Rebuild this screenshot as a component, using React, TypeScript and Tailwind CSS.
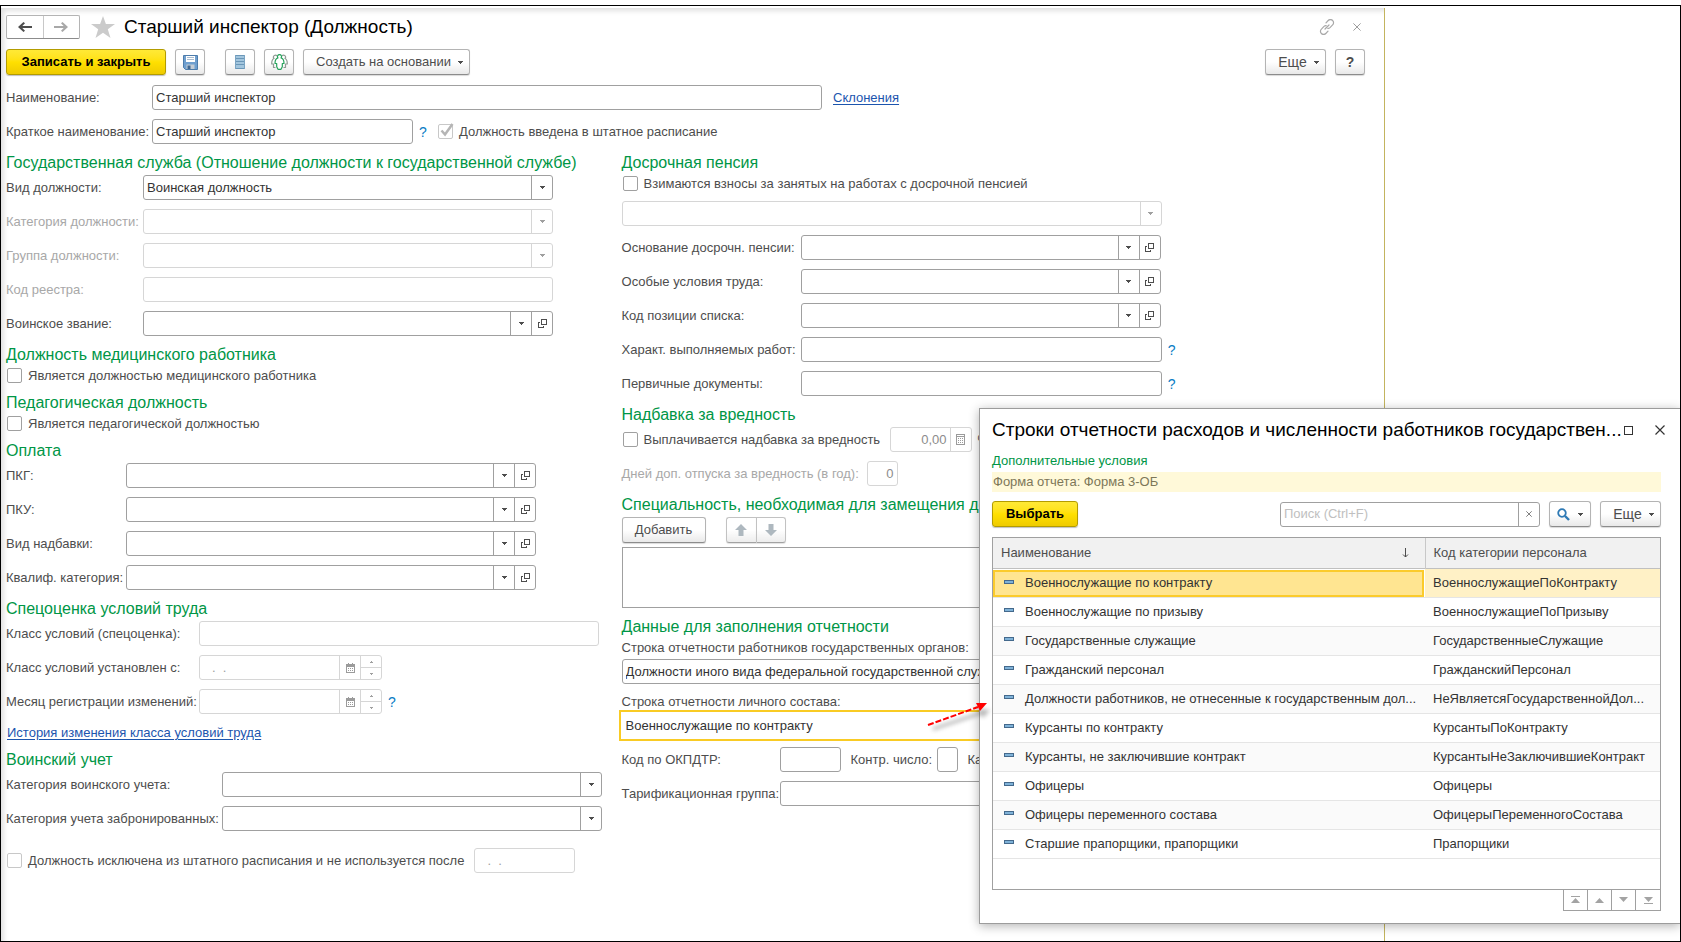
import { useId } from "react";
import type { ReactNode } from "react";
import clsx from "clsx";

// ICONS //
function CaretIcon({ className }: { className?: string }) {
  return (
    <svg className={className} width="5" height="3" viewBox="0 0 5 3" fill="currentColor" shapeRendering="crispEdges">
      <path d="M0 0h5v1H4v1H3v1H2V2H1V1H0z" />
    </svg>
  );
}

function OpenIcon() {
  return (
    <svg width="9" height="9" viewBox="0 0 9 9" fill="none" stroke="currentColor" shapeRendering="crispEdges">
      <path d="M3.5 .5h5v5h-5z" />
      <path d="M2 3.5H.5v5h5V7" />
    </svg>
  );
}

function ArrowLeftIcon({ className }: { className?: string }) {
  return (
    <svg className={className} width="14" height="10" viewBox="0 0 14 10" fill="currentColor">
      <path d="M0 5l5.500-5L7 1.200 4.300 4H14v2H4.300L7 8.800 5.500 10z" />
    </svg>
  );
}

function StarIcon() {
  return (
    <svg width="24" height="22" viewBox="0 0 24 22" fill="#cbcbcb">
      <path d="M12 0l2.900 8H24l-7.200 5.200L19.500 22 12 16.700 4.500 22l2.700-8.800L0 8h9.100z" />
    </svg>
  );
}

function LinkIcon() {
  return (
    <svg width="16" height="16" viewBox="0 0 16 16" fill="none" stroke="#a8a8a8" strokeWidth="1.200" strokeLinecap="round">
      <path d="M7 3.800l2.200-2.300a3 3 0 0 1 4.400 0 3 3 0 0 1 0 4.400L11 8.600a3 3 0 0 1-2.200.7" />
      <path d="M9 12.200l-2.200 2.300a3 3 0 0 1-4.400 0 3 3 0 0 1 0-4.400L5 7.400a3 3 0 0 1 2.200-.7" />
      <path d="M6 10l4-4" />
    </svg>
  );
}

function CrossIcon({ size, color }: { size: number; color: string }) {
  return (
    <svg width={size} height={size} viewBox="0 0 10 10" fill="none" stroke={color} strokeWidth="1.200">
      <path d="M.5.5l9 9M9.500.5l-9 9" />
    </svg>
  );
}

function SaveIcon() {
  return (
    <svg width="15" height="15" viewBox="0 0 15 15">
      <path d="M.5.5h14v14H2.500l-2-2z" fill="#6f9fcf" stroke="#4d7cab" />
      <path d="M3 1h9v6H3z" fill="#fff" />
      <path d="M4 2.500h7M4 4.500h7" stroke="#a9bccf" />
      <path d="M3.500 9.500h8V14h-8z" fill="#c3ccd5" />
      <path d="M4.500 10.500h3V14h-3z" fill="#3f6790" />
    </svg>
  );
}

function ListIcon() {
  return (
    <svg width="10" height="14" viewBox="0 0 10 14" shapeRendering="crispEdges">
      <path d="M0 0h10v14H0z" fill="#a3c6de" />
      <path d="M0 .5h10M0 3.500h10M0 6.500h10M0 9.500h10M0 13.500h10" stroke="#6b97b8" />
      <path d="M.5 0v14M9.500 0v14" stroke="#7ba5c4" />
    </svg>
  );
}

function PeopleIcon() {
  return (
    <svg width="17" height="16" viewBox="0 0 17 16" fill="none" strokeWidth="1.200" strokeLinejoin="round">
      <path
        d="M6 1.800a2 2 0 0 0-3 2.700C1.200 5.200.7 6.500.7 10H2.500v3.500h2M11 1.800a2 2 0 0 1 3 2.700c1.800.7 2.300 2 2.300 5.500h-1.800v3.500h-2"
        stroke="#8f9a93"
      />
      <path
        d="M8.500.7a1.900 1.900 0 0 1 1.500 3.200c2.300.5 3 2 3 5.600h-1.700v3.300L10 15.300H7l-1.300-2.500V9.500H4c0-3.600.7-5.100 3-5.600A1.900 1.900 0 0 1 8.500.7z"
        stroke="#27a35c"
        fill="#fff"
      />
    </svg>
  );
}

function CalcIcon() {
  return (
    <svg width="9" height="11" viewBox="0 0 9 11" fill="none" stroke="#9b9b9b" shapeRendering="crispEdges">
      <path d="M.5.5h8v10h-8zM0 2.500h9" />
      <path d="M2 4.500h5M2 6.500h5M2 8.500h5" strokeDasharray="1 1" />
    </svg>
  );
}

function CalendarIcon() {
  return (
    <svg width="9" height="10" viewBox="0 0 9 10" fill="none" stroke="#9b9b9b" shapeRendering="crispEdges">
      <path d="M.5 1.500h8v8h-8zM0 2.500h9M0 3.500h9M2.500 0v2M6.500 0v2" />
      <path d="M2 5.500h5M2 7.500h5" strokeDasharray="1 1" />
    </svg>
  );
}

function MoveIcon({ down }: { down?: boolean }) {
  return (
    <svg className={clsx(down && "rotate-180")} width="12" height="12" viewBox="0 0 12 12" fill="#9aa7b0">
      <path d="M6 0l6 6H8.500v6h-5V6H0z" />
    </svg>
  );
}

function SearchIcon() {
  return (
    <svg width="13" height="13" viewBox="0 0 13 13" fill="none" stroke="#2f7ab5">
      <circle cx="5" cy="5" r="3.800" strokeWidth="1.800" />
      <path d="M8 8l4 4" strokeWidth="2.400" />
    </svg>
  );
}

function ItemIcon() {
  return (
    <svg className="mb-[3px]" width="10" height="4" viewBox="0 0 10 4" shapeRendering="crispEdges">
      <path d="M0 0h10v4H0z" fill="#44698c" />
      <path d="M1 1h8v2H1z" fill="#7fb2d8" />
    </svg>
  );
}

function SortIcon() {
  return (
    <svg width="7" height="10" viewBox="0 0 7 10" fill="none" stroke="#4d4d4d">
      <path d="M3.500 0v9M1 6.500L3.500 9 6 6.500" />
    </svg>
  );
}

function PagerIcon({ down, bar }: { down?: boolean; bar?: boolean }) {
  return (
    <svg className={clsx(down && "rotate-180")} width="9" height="8" viewBox="0 0 9 8" fill="#a3a3a3">
      {bar && <path d="M0 0h9v1H0z" />}
      <path d="M4.500 2L9 7H0z" />
    </svg>
  );
}

// CONTROLS //
const FRAME = "h-[25px] flex items-stretch border rounded-[3px] bg-white min-w-0";
const BUTTON =
  "h-[26px] flex items-center justify-center border border-[#b4b4b4] border-b-[#8c8c8c] rounded-[3px] bg-linear-to-b from-white from-50% to-[#e9e9e9] text-[#4d4d4d] shadow-[0_1px_1px_rgba(0,0,0,0.15)]";
const PRIMARY =
  "h-[26px] border border-[#b39c00] rounded-[3px] bg-linear-to-b from-[#ffe936] via-[#ffe000] to-[#efcb00] text-black font-bold shadow-[0_1px_1px_rgba(0,0,0,0.25)]";

function frameColor(disabled?: boolean) {
  return disabled ? "border-[#d6d6d6] text-[#a0a0a0]" : "border-[#a0a0a0] text-[#4d4d4d]";
}

interface FieldProps {
  label: string;
  labelClass: string;
  boxClass?: string;
  kind?: "text" | "select" | "ref" | "date";
  value?: string;
  disabled?: boolean;
  dimLabel?: boolean;
  hint?: boolean;
}

function Hint() {
  return (
    <button type="button" className="w-2 ml-1.5 text-sm leading-4 text-[#0a7cc4]">
      ?
    </button>
  );
}

// Label with a text box, drop-down, reference or date box
function Field({ label, labelClass, boxClass, kind = "text", value = "", disabled, dimLabel, hint }: FieldProps) {
  const id = useId();
  const color = frameColor(disabled);
  return (
    <div className="flex items-center">
      <label htmlFor={id} className={clsx("shrink-0 whitespace-nowrap", labelClass, dimLabel && "text-[#a8a8a8]")}>
        {label}
      </label>
      <div className={clsx(FRAME, color, boxClass)}>
        {kind === "select" || kind === "ref" ? (
          <>
            <select
              id={id}
              disabled={disabled}
              defaultValue={value}
              className="flex-1 min-w-0 appearance-none px-[3px] text-[#333]"
            >
              <option value={value}>{value}</option>
            </select>
            <span className={clsx("w-[21px] flex items-center justify-center border-l", color)}>
              <CaretIcon />
            </span>
          </>
        ) : (
          <input
            id={id}
            disabled={disabled}
            defaultValue={value}
            className={clsx("flex-1 min-w-0 w-full", kind === "date" ? "px-3" : "px-[3px] text-[#333]")}
          />
        )}
        {kind === "ref" && (
          <button type="button" aria-label="Открыть" className={clsx("w-[21px] flex items-center justify-center border-l", color)}>
            <OpenIcon />
          </button>
        )}
        {kind === "date" && (
          <>
            <button type="button" aria-label="Календарь" className={clsx("w-[21px] flex items-center justify-center border-l", color)}>
              <CalendarIcon />
            </button>
            <div className={clsx("w-[21px] flex flex-col border-l", color)}>
              <button type="button" aria-label="Больше" className="flex-1 flex items-center justify-center">
                <CaretIcon className="w-[3px] h-[2px] rotate-180" />
              </button>
              <button type="button" aria-label="Меньше" className={clsx("flex-1 flex items-center justify-center border-t", color)}>
                <CaretIcon className="w-[3px] h-[2px]" />
              </button>
            </div>
          </>
        )}
      </div>
      {hint && <Hint />}
    </div>
  );
}

interface CheckProps {
  label: string;
  checked?: boolean;
  disabled?: boolean;
}

function Check({ label, checked, disabled }: CheckProps) {
  return (
    <label className="h-[17px] flex items-center gap-1.5 pl-px whitespace-nowrap">
      <span className="grid size-[15px] shrink-0">
        <input
          type="checkbox"
          defaultChecked={checked}
          disabled={disabled}
          className={clsx(
            "col-start-1 row-start-1 size-[15px] appearance-none border rounded-[2px] bg-white",
            disabled ? "border-[#c8c8c8]" : "border-[#a0a0a0]"
          )}
        />
        {checked && (
          <svg className="col-start-1 row-start-1 size-[15px] overflow-visible" viewBox="0 0 15 15" fill="none" stroke="#b5b5b5" strokeWidth="2.500">
            <path d="M3.500 6.500l3.500 4L14.500 0" />
          </svg>
        )}
      </span>
      {label}
    </label>
  );
}

function Section({ title, children }: { title: string; children: ReactNode }) {
  return (
    <section className="flex flex-col gap-[3px]">
      <h2 className="h-5 text-base leading-[22px] text-[#009646] whitespace-nowrap">{title}</h2>
      <div className="flex flex-col gap-[9px]">{children}</div>
    </section>
  );
}

function MoreButton() {
  return (
    <button type="button" className={clsx(BUTTON, "w-[61px] gap-[7px] pl-1.5 text-sm")}>
      Еще
      <CaretIcon />
    </button>
  );
}

// LEFT COLUMN //
const W_KIND = "w-[137px]";
const W_PAY = "w-[120px]";
const W_SPEC = "w-[193px]";
const W_ARMY = "w-[216px]";
const BOX = "flex-1 max-w-[410px]";

function LeftColumn() {
  return (
    <div className="flex flex-col gap-2 min-w-0">
      <Section title="Государственная служба (Отношение должности к государственной службе)">
        <Field label="Вид должности:" labelClass={W_KIND} boxClass={BOX} kind="select" value="Воинская должность" />
        <Field label="Категория должности:" labelClass={W_KIND} boxClass={BOX} kind="select" disabled dimLabel />
        <Field label="Группа должности:" labelClass={W_KIND} boxClass={BOX} kind="select" disabled dimLabel />
        <Field label="Код реестра:" labelClass={W_KIND} boxClass={BOX} disabled dimLabel />
        <Field label="Воинское звание:" labelClass={W_KIND} boxClass={BOX} kind="ref" />
      </Section>
      <Section title="Должность медицинского работника">
        <Check label="Является должностью медицинского работника" />
      </Section>
      <Section title="Педагогическая должность">
        <Check label="Является педагогической должностью" />
      </Section>
      <Section title="Оплата">
        <Field label="ПКГ:" labelClass={W_PAY} boxClass={BOX} kind="ref" />
        <Field label="ПКУ:" labelClass={W_PAY} boxClass={BOX} kind="ref" />
        <Field label="Вид надбавки:" labelClass={W_PAY} boxClass={BOX} kind="ref" />
        <Field label="Квалиф. категория:" labelClass={W_PAY} boxClass={BOX} kind="ref" />
      </Section>
      <Section title="Спецоценка условий труда">
        <Field label="Класс условий (спецоценка):" labelClass={W_SPEC} boxClass="flex-1 max-w-[400px]" disabled />
        <Field label="Класс условий установлен с:" labelClass={W_SPEC} boxClass="w-[183px]" kind="date" value=".  ." disabled />
        <Field label="Месяц регистрации изменений:" labelClass={W_SPEC} boxClass="w-[183px]" kind="date" disabled hint />
        <a href="#history" className="h-[18px] pl-px self-start leading-5 text-[#1c55ae] underline underline-offset-2">
          История изменения класса условий труда
        </a>
      </Section>
      <Section title="Воинский учет">
        <Field label="Категория воинского учета:" labelClass={W_ARMY} boxClass="flex-1 max-w-[380px]" kind="select" />
        <Field label="Категория учета забронированных:" labelClass={W_ARMY} boxClass="flex-1 max-w-[380px]" kind="select" />
        <div className="flex items-center gap-2.5 mt-2">
          <Check label="Должность исключена из штатного расписания и не используется после" disabled />
          <div className={clsx(FRAME, frameColor(true), "w-[101px]")}>
            <input aria-label="Дата исключения" disabled defaultValue=".  ." className="w-full px-3" />
          </div>
        </div>
      </Section>
    </div>
  );
}

// RIGHT COLUMN //
const W_PENSION = "w-[179px]";

function RightColumn() {
  return (
    <div className="flex flex-col gap-2 min-w-0">
      <Section title="Досрочная пенсия">
        <Check label="Взимаются взносы за занятых на работах с досрочной пенсией" />
        <div className={clsx(FRAME, frameColor(true), "max-w-[540px]")}>
          <select aria-label="Вид досрочной пенсии" disabled className="flex-1 appearance-none" />
          <span className="w-[21px] flex items-center justify-center border-l border-[#d6d6d6]">
            <CaretIcon />
          </span>
        </div>
        <Field label="Основание досрочн. пенсии:" labelClass={W_PENSION} boxClass="flex-1 max-w-[360px]" kind="ref" />
        <Field label="Особые условия труда:" labelClass={W_PENSION} boxClass="flex-1 max-w-[360px]" kind="ref" />
        <Field label="Код позиции списка:" labelClass={W_PENSION} boxClass="flex-1 max-w-[360px]" kind="ref" />
        <Field label="Характ. выполняемых работ:" labelClass={W_PENSION} boxClass="flex-1 max-w-[361px]" hint />
        <Field label="Первичные документы:" labelClass={W_PENSION} boxClass="flex-1 max-w-[361px]" hint />
      </Section>
      <Section title="Надбавка за вредность">
        <div className="flex items-center">
          <div className="w-[268px]">
            <Check label="Выплачивается надбавка за вредность" />
          </div>
          <div className={clsx(FRAME, frameColor(true), "w-[82px]")}>
            <input aria-label="Процент надбавки" disabled defaultValue="0,00" className="flex-1 min-w-0 px-[3px] text-right text-[#8c8c8c]" />
            <button type="button" aria-label="Калькулятор" className="w-[21px] flex items-center justify-center border-l border-[#d6d6d6]">
              <CalcIcon />
            </button>
          </div>
          <span className="ml-1.5">%</span>
        </div>
        <div className="flex items-center">
          <label htmlFor="extra-days" className="w-[245px] whitespace-nowrap text-[#a8a8a8]">
            Дней доп. отпуска за вредность (в год):
          </label>
          <div className={clsx(FRAME, frameColor(true), "w-[31px]")}>
            <input id="extra-days" disabled defaultValue="0" className="w-full px-[3px] text-right text-[#8c8c8c]" />
          </div>
        </div>
      </Section>
      <Section title="Специальность, необходимая для замещения должности">
        <div className="flex flex-col gap-1">
          <div className="flex gap-5">
            <button type="button" className={clsx(BUTTON, "w-[84px]")}>
              Добавить
            </button>
            <div className="flex">
              <button type="button" aria-label="Вверх" className={clsx(BUTTON, "w-[30px] rounded-r-none border-r-0 opacity-80")}>
                <MoveIcon />
              </button>
              <button type="button" aria-label="Вниз" className={clsx(BUTTON, "w-[30px] rounded-l-none opacity-80")}>
                <MoveIcon down />
              </button>
            </div>
          </div>
          <div className="h-[61px] border border-[#a0a0a0]" />
        </div>
      </Section>
      <Section title="Данные для заполнения отчетности">
        <div className="flex flex-col gap-[3px]">
          <label htmlFor="gov-line" className="h-[17px] leading-[18px]">
            Строка отчетности работников государственных органов:
          </label>
          <div className={clsx(FRAME, frameColor())}>
            <input
              id="gov-line"
              defaultValue="Должности иного вида федеральной государственной службы"
              className="w-full px-[3px] text-[#333]"
            />
          </div>
        </div>
        <div className="flex flex-col gap-[3px]">
          <label htmlFor="staff-line" className="h-[17px] leading-[18px]">
            Строка отчетности личного состава:
          </label>
          <div className="h-[25px] flex outline-2 outline-offset-1 outline-[#f9cb24]">
            <input id="staff-line" defaultValue="Военнослужащие по контракту" className="w-full px-1 text-[#333] outline-none" />
          </div>
        </div>
        <div className="flex items-center gap-2.5">
          <Field label="Код по ОКПДТР:" labelClass="w-[158px]" boxClass="w-[61px]" />
          <Field label="Контр. число:" labelClass="w-[86px]" boxClass="w-[21px]" />
          <Field label="Категория:" labelClass="w-[86px]" boxClass="w-[61px]" />
        </div>
        <Field label="Тарификационная группа:" labelClass="w-[158px]" boxClass="flex-1 max-w-[382px]" />
      </Section>
    </div>
  );
}

// PICK DIALOG //
const ROWS = [
  { name: "Военнослужащие по контракту", code: "ВоеннослужащиеПоКонтракту" },
  { name: "Военнослужащие по призыву", code: "ВоеннослужащиеПоПризыву" },
  { name: "Государственные служащие", code: "ГосударственныеСлужащие" },
  { name: "Гражданский персонал", code: "ГражданскийПерсонал" },
  { name: "Должности работников, не отнесенные к государственным дол...", code: "НеЯвляетсяГосударственнойДол..." },
  { name: "Курсанты по контракту", code: "КурсантыПоКонтракту" },
  { name: "Курсанты, не заключившие контракт", code: "КурсантыНеЗаключившиеКонтракт" },
  { name: "Офицеры", code: "Офицеры" },
  { name: "Офицеры переменного состава", code: "ОфицерыПеременногоСостава" },
  { name: "Старшие прапорщики, прапорщики", code: "Прапорщики" },
];

const PAGER = [
  { label: "В начало", bar: true },
  { label: "Назад" },
  { label: "Вперед", down: true },
  { label: "В конец", down: true, bar: true },
];

function PickDialog() {
  return (
    <div
      role="dialog"
      aria-labelledby="pick-title"
      className="absolute top-[402px] right-0 w-[701px] border border-r-0 border-[#9c9c9c] bg-white pl-3 pr-[19px] pb-3 shadow-[0_2px_10px_rgba(0,0,0,0.3)]"
    >
      <div className="flex items-center h-[42px]">
        <h1 id="pick-title" className="flex-1 text-[19px] text-black whitespace-nowrap">
          Строки отчетности расходов и численности работников государствен...
        </h1>
        <button type="button" aria-label="Развернуть" className="size-[9px] shrink-0 border border-[#333]" />
        <button type="button" aria-label="Закрыть" className="ml-[22px] -mr-1">
          <CrossIcon size={10} color="#333" />
        </button>
      </div>
      <p className="h-[21px] leading-5 text-[#009646]">Дополнительные условия</p>
      <p className="h-5 pl-px leading-5 bg-[#fff9d9] text-[#7d7758]">Форма отчета: Форма 3-ОБ</p>
      <div className="flex items-center gap-[9px] mt-[9px]">
        <button type="button" className={clsx(PRIMARY, "w-[86px] mr-auto")}>
          Выбрать
        </button>
        <div className={clsx(FRAME, frameColor(), "w-[260px]")}>
          <input aria-label="Поиск" placeholder="Поиск (Ctrl+F)" className="flex-1 min-w-0 px-[3px] placeholder:text-[#c0c0c0]" />
          <button type="button" aria-label="Очистить" className="w-[21px] flex items-center justify-center border-l border-[#a0a0a0]">
            <CrossIcon size={6} color="#4d4d4d" />
          </button>
        </div>
        <button type="button" aria-label="Найти" className={clsx(BUTTON, "w-[42px] gap-2")}>
          <SearchIcon />
          <CaretIcon />
        </button>
        <MoreButton />
      </div>
      <div className="mt-2.5 min-h-[353px] border border-[#a0a0a0]">
        <table className="w-full table-fixed border-collapse text-left">
          <thead>
            <tr className="h-[30px] bg-[#f1f1f1] border-b border-[#c0c0c0]">
              <th className="w-[432px] px-2 font-normal border-r border-[#c8c8c8]">
                <span className="flex items-center justify-between pr-2">
                  Наименование
                  <SortIcon />
                </span>
              </th>
              <th className="px-2 font-normal">Код категории персонала</th>
            </tr>
          </thead>
          <tbody>
            {ROWS.map((row, i) => (
              <tr key={row.code} className={clsx("h-[29px] border-b border-[#e5e5e5] text-[#333]", i > 0 && i % 2 === 0 && "bg-[#fafafa]")}>
                <td className={clsx("p-0", i === 0 && "pt-px pr-px")}>
                  <span
                    className={clsx(
                      "flex items-center gap-[11px] h-[27px] whitespace-nowrap",
                      i === 0 ? "pl-[9px] border-2 border-[#fbcb2c] bg-[#ffe591]" : "pl-[11px]"
                    )}
                  >
                    <ItemIcon />
                    {row.name}
                  </span>
                </td>
                <td className={clsx("px-2 whitespace-nowrap", i === 0 && "bg-[#fff1c6]")}>{row.code}</td>
              </tr>
            ))}
          </tbody>
        </table>
      </div>
      <div className="flex justify-end">
        <div className="flex border border-t-0 border-[#a0a0a0] divide-x divide-[#a0a0a0]">
          {PAGER.map((p) => (
            <button key={p.label} type="button" aria-label={p.label} className="w-6 h-5 flex items-center justify-center">
              <PagerIcon down={p.down} bar={p.bar} />
            </button>
          ))}
        </div>
      </div>
    </div>
  );
}

// Arrow from the field to the dialog
function PointerArrow() {
  return (
    <svg className="absolute top-[692px] left-[920px] pointer-events-none" width="80" height="50" viewBox="0 0 80 50">
      <g opacity="0.35" className="blur-[2px]">
        <path d="M12 31L60 15" stroke="#333" strokeWidth="3" />
        <path d="M69 12L57 11l5 9z" fill="#333" />
      </g>
      <path d="M7 27L57 9" stroke="#f00" strokeWidth="2" strokeDasharray="6 2" />
      <path d="M66 5L55 5l4 8z" fill="#f00" />
    </svg>
  );
}

export default function App() {
  return (
    <div className="min-h-screen flex flex-col pt-[5px] bg-white font-['Liberation_Sans',Arial,sans-serif] text-[13px] leading-4 text-[#4d4d4d]">
      <div className="relative flex-1 flex border border-black overflow-hidden">
        <main className="flex-1 mt-0.5 mr-[295px] pl-[5px] pr-[19px] pt-[7px] border-r border-[#c3b45e] shadow-[inset_6px_6px_5px_-3px_rgba(0,0,0,0.12)]">
          <header className="flex items-center h-6">
            <div className="flex w-[74px] h-6 border border-[#b4b4b4] border-b-[#8c8c8c] rounded-[2px] divide-x divide-[#c8c8c8]">
              <button type="button" aria-label="Назад" className="flex-1 flex items-center justify-center">
                <ArrowLeftIcon />
              </button>
              <button type="button" aria-label="Вперед" className="flex-1 flex items-center justify-center text-[#a8a8a8]">
                <ArrowLeftIcon className="rotate-180" />
              </button>
            </div>
            <button type="button" aria-label="В избранное" className="ml-[11px]">
              <StarIcon />
            </button>
            <h1 className="ml-[9px] mr-auto text-[19px] text-black whitespace-nowrap">Старший инспектор (Должность)</h1>
            <button type="button" aria-label="Ссылка">
              <LinkIcon />
            </button>
            <button type="button" aria-label="Закрыть" className="ml-[18px] mr-1">
              <CrossIcon size={8} color="#999" />
            </button>
          </header>

          {/* Toolbar */}
          <div className="flex mt-2.5">
            <button type="button" className={clsx(PRIMARY, "w-[160px]")}>
              Записать и закрыть
            </button>
            <button type="button" aria-label="Записать" className={clsx(BUTTON, "w-[30px] ml-[9px]")}>
              <SaveIcon />
            </button>
            <button type="button" aria-label="Список" className={clsx(BUTTON, "w-[30px] ml-5")}>
              <ListIcon />
            </button>
            <button type="button" aria-label="Сотрудники" className={clsx(BUTTON, "w-[30px] ml-[9px]")}>
              <PeopleIcon />
            </button>
            <button type="button" className={clsx(BUTTON, "w-[167px] ml-[9px] mr-auto gap-[7px] pl-1.5")}>
              Создать на основании
              <CaretIcon />
            </button>
            <MoreButton />
            <button type="button" className={clsx(BUTTON, "w-[30px] ml-[9px] text-sm font-bold")}>
              ?
            </button>
          </div>

          {/* Names */}
          <div className="flex flex-col gap-[9px] mt-2.5">
            <div className="flex items-center gap-[11px]">
              <div className="w-[816px]">
                <Field label="Наименование:" labelClass="w-[146px]" boxClass="flex-1" value="Старший инспектор" />
              </div>
              <a href="#declension" className="text-[#1c55ae] underline underline-offset-2">
                Склонения
              </a>
            </div>
            <div className="flex items-center gap-2.5">
              <Field label="Краткое наименование:" labelClass="w-[146px]" boxClass="w-[261px]" value="Старший инспектор" hint />
              <Check label="Должность введена в штатное расписание" checked disabled />
            </div>
          </div>

          <div className="grid grid-cols-[616fr_744fr] mt-2">
            <LeftColumn />
            <RightColumn />
          </div>
        </main>
        <PickDialog />
        <PointerArrow />
      </div>
    </div>
  );
}
